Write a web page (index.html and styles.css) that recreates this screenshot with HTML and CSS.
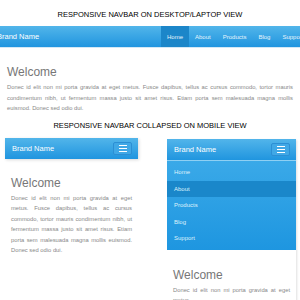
FILE: index.html
```html
<!DOCTYPE html>
<html>
<head>
    <title>Responsive Navbar</title>
    <link rel="stylesheet" href="styles.css">
</head>
<body>
    <h4 class="caption caption-top">RESPONSIVE NAVBAR ON DESKTOP/LAPTOP VIEW</h4>
    <div class="desktop">
        <nav class="navbar">
            <span class="brand">Brand Name</span>
            <ul class="nav">
                <li class="active">Home</li>
                <li>About</li>
                <li>Products</li>
                <li>Blog</li>
                <li>Support</li>
            </ul>
        </nav>
        <div class="content">
            <h1>Welcome</h1>
            <p>Donec id elit non mi porta gravida at eget metus. Fusce dapibus, tellus ac cursus commodo, tortor mauris condimentum nibh, ut fermentum massa justo sit amet risus. Etiam porta sem malesuada magna mollis euismod. Donec sed odio dui.</p>
        </div>
    </div>

    <h4 class="caption">RESPONSIVE NAVBAR COLLAPSED ON MOBILE VIEW</h4>
    <div class="mobiles">
        <div class="phone">
            <nav class="navbar">
                <span class="brand">Brand Name</span>
                <span class="toggle"><i></i><i></i><i></i></span>
            </nav>
            <div class="content">
                <h1>Welcome</h1>
                <p>Donec id elit non mi porta gravida at eget metus. Fusce dapibus, tellus ac cursus commodo, tortor mauris condimentum nibh, ut fermentum massa justo sit amet risus. Etiam porta sem malesuada magna mollis euismod. Donec sed odio dui.</p>
            </div>
        </div>
        <div class="phone phone-open">
            <nav class="navbar">
                <span class="brand">Brand Name</span>
                <span class="toggle"><i></i><i></i><i></i></span>
            </nav>
            <ul class="menu">
                <li>Home</li>
                <li class="active">About</li>
                <li>Products</li>
                <li>Blog</li>
                <li>Support</li>
            </ul>
            <div class="content">
                <h1>Welcome</h1>
                <p>Donec id elit non mi porta gravida at eget metus.</p>
            </div>
        </div>
    </div>
</body>
</html>
```

FILE: styles.css
```css
html, body {
    margin: 0;
    padding: 0;
}
body {
    width: 300px;
    height: 300px;
    overflow: hidden;
    background-color: #fff;
    font-family: "Liberation Sans", Arial, sans-serif;
}
ul {
    list-style: none;
    margin: 0;
    padding: 0;
}
.caption {
    margin: 0;
    font-size: 7.5px;
    line-height: 9px;
    font-weight: normal;
    color: #000;
    text-align: center;
    padding: 7px 0 8px;
}
.caption-top {
    padding: 9.5px 0 7.5px;
}
.navbar {
    display: flex;
    align-items: center;
    height: 21px;
    background: linear-gradient(#52b5ea, #2095df);
    color: #fff;
}
.brand {
    font-size: 7.5px;
    color: #fff;
}
.desktop .navbar {
    align-items: stretch;
    overflow: hidden;
    border-bottom: 1px solid #d3e8f6;
}
.desktop .brand {
    flex: 0 0 161px;
    display: flex;
    align-items: center;
    text-indent: -3px;
}
.nav {
    display: flex;
    flex: 0 0 auto;
}
.nav li {
    display: flex;
    align-items: center;
    padding: 0 6px;
    font-size: 6px;
    color: #e6f4fc;
}
.nav li.active {
    background-color: #1c86c9;
}
.content {
    padding: 0 7px;
}
.content h1 {
    margin: 17px 0 3px;
    font-size: 12px;
    line-height: 14px;
    font-weight: normal;
    color: #777;
}
.content p {
    margin: 0;
    font-size: 5.8px;
    line-height: 10.5px;
    color: #888;
    text-align: justify;
}
.mobiles {
    display: flex;
    gap: 29px;
    padding-left: 5px;
}
.phone {
    flex: 0 0 133px;
}
.phone-open {
    flex: 0 0 129px;
    margin-top: 1px;
    height: 200px;
    box-shadow: 2px 0 2px -1px rgba(0, 0, 0, 0.12);
}
.phone .navbar {
    justify-content: space-between;
    padding: 0 6px 0 7px;
    box-shadow: 1px 1px 3px rgba(0, 0, 0, 0.15);
}
.phone-open .navbar {
    box-shadow: none;
    border-bottom: 1px solid #8fd0f3;
}
.phone .content {
    padding: 0 6px;
}
.toggle {
    display: flex;
    flex-direction: column;
    justify-content: center;
    align-items: center;
    gap: 2px;
    width: 17px;
    height: 11px;
    border: 1px solid #2c8fd4;
    border-radius: 2px;
    background-color: #40a8e6;
}
.toggle i {
    display: block;
    width: 8px;
    height: 1px;
    background-color: #fff;
}
.menu {
    background: linear-gradient(#3aa9e8, #1e96e0);
    padding: 3.5px 0 3px;
}
.menu li {
    height: 16.5px;
    line-height: 16.5px;
    padding-left: 7px;
    font-size: 6px;
    color: #dff1fc;
}
.menu li.active {
    background-color: #1a87ca;
}
.phone-open .content h1 {
    margin-top: 18px;
}
```
